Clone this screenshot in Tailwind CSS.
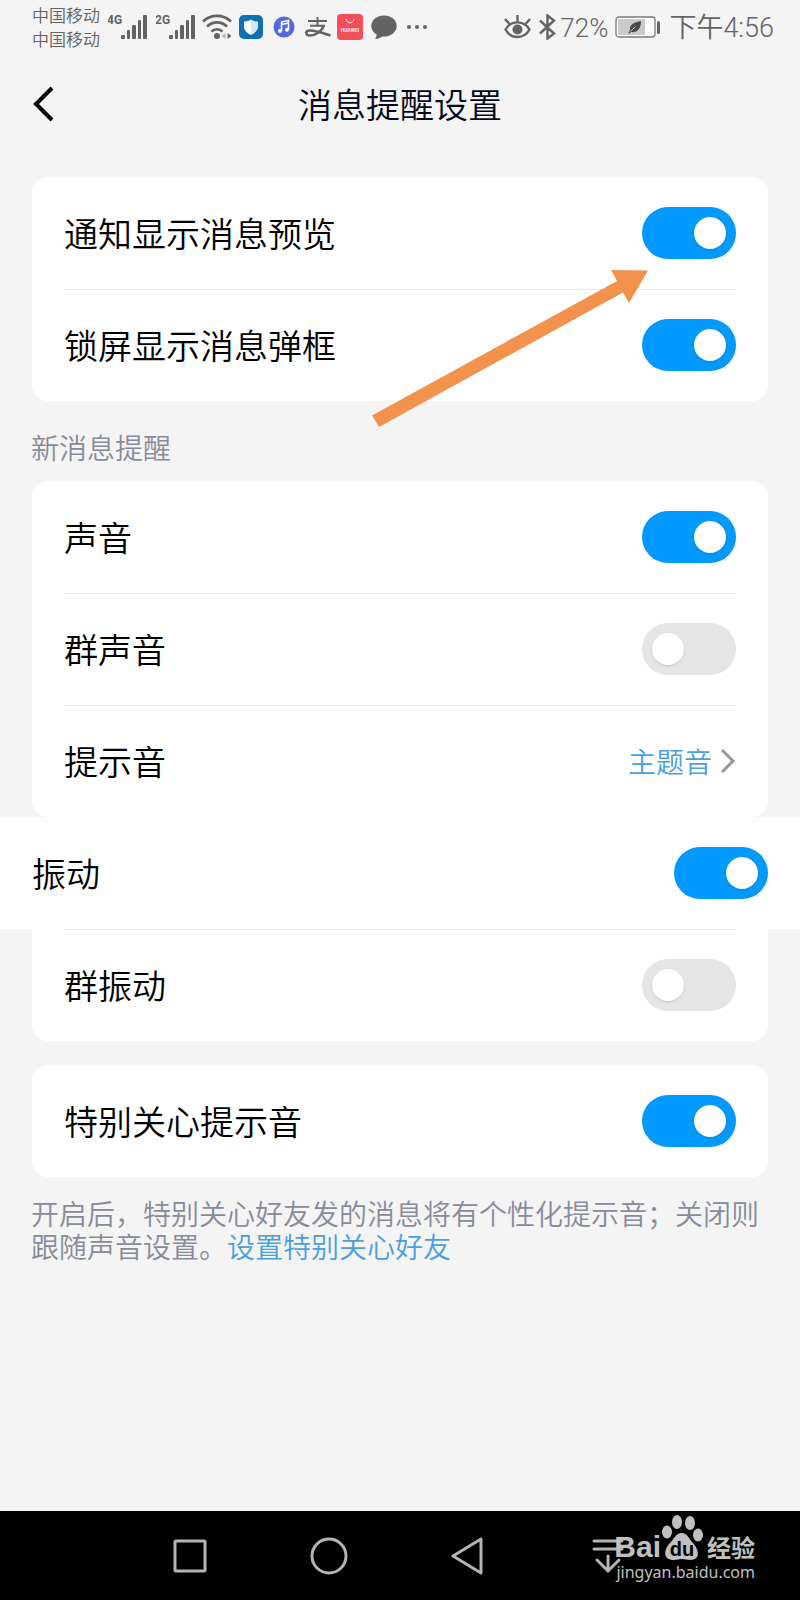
<!DOCTYPE html>
<html lang="zh-CN">
<head>
    <meta charset="UTF-8">
    <meta name="viewport" content="width=device-width, initial-scale=1.0">
    <title>消息提醒设置</title>
    <script src="https://cdn.jsdelivr.net/npm/@tailwindcss/browser@4"></script>
</head>
<body class="relative flex min-h-screen flex-col bg-[#f4f4f4] font-['Roboto','Noto_Sans_CJK_SC',sans-serif] font-[350] text-black">

    <!-- 状态栏 -->
    <div class="flex h-[54px] items-center justify-between pl-8 pr-[26px] text-[#636363]">
        <div class="flex items-center">
            <div class="pt-[2px] text-[17px] leading-6">
                <div>中国移动</div>
                <div>中国移动</div>
            </div>
            <!-- 信号 -->
            <svg class="ml-2 h-7 w-10" viewBox="0 0 40 28" fill="currentColor">
                <text x="-1" y="11" font-family="Roboto" font-size="12" font-weight="700">4G</text>
                <rect x="13" y="22" width="4" height="4" rx="1"/>
                <rect x="19" y="17" width="3" height="9" rx="1"/>
                <rect x="24" y="12" width="4" height="14" rx="1"/>
                <rect x="30" y="7" width="3" height="19" rx="1"/>
                <rect x="35" y="2" width="4" height="24" rx="1"/>
            </svg>
            <svg class="ml-2 h-7 w-10" viewBox="0 0 40 28" fill="currentColor">
                <text x="-1" y="11" font-family="Roboto" font-size="12" font-weight="700">2G</text>
                <rect x="13" y="22" width="4" height="4" rx="1"/>
                <rect x="19" y="17" width="3" height="9" rx="1"/>
                <rect x="24" y="12" width="4" height="14" rx="1"/>
                <rect x="30" y="7" width="3" height="19" rx="1"/>
                <rect x="35" y="2" width="4" height="24" rx="1"/>
            </svg>
            <!-- WiFi -->
            <svg class="ml-[6px] h-7 w-[30px]" viewBox="0 0 30 28" fill="none" stroke="currentColor" stroke-width="2.6">
                <path d="M1 8.500C9 1 21 1 29 8.500"/>
                <path d="M5 13.500C11 8 19 8 25 13.500"/>
                <path d="M9.500 18.500C12.500 15.500 17.500 15.500 20.500 18.500"/>
                <circle cx="15" cy="23" r="3" fill="currentColor" stroke="none"/>
                <path d="M23.500 20v6l-4-3z" fill="#b5b5b5" stroke="none"/>
                <path d="M25.500 20v6l4-3z" fill="currentColor" stroke="none"/>
            </svg>
            <!-- 手机管家 -->
            <svg class="ml-[7px] size-6" viewBox="0 0 24 24">
                <rect width="24" height="24" rx="5" fill="#0c70b3"/>
                <path d="M12 4.500c2.500 1.600 4.500 2 7 2v5c0 4-3 6.500-7 8.500z" fill="#d3e9f5"/>
                <path d="M12 4.500c-2.500 1.600-4.500 2-7 2v5c0 4 3 6.500 7 8.500z" fill="#fff"/>
            </svg>
            <!-- 音乐 -->
            <svg class="ml-[10px] size-[22px]" viewBox="0 0 22 22">
                <circle cx="11" cy="11" r="10.500" fill="#5369dc"/>
                <path d="M8.500 15V6l7-1.500V13.500M8.500 8.500l7-1.500" fill="none" stroke="#fff" stroke-width="1.500"/>
                <circle cx="7" cy="15" r="2" fill="#fff"/>
                <circle cx="14" cy="13.700" r="2" fill="#fff"/>
            </svg>
            <!-- 支付宝 -->
            <svg class="ml-[10px] h-[20px] w-[26px]" viewBox="0 0 26 20" fill="none" stroke="currentColor">
                <path d="M3 4h19M12.500 0v8.500M5 8.700h15" stroke-width="2"/>
                <path d="M19 8.500C17 14 11 18.500 5 18.500c-5 0-5-5 0-5 6 0 13 2.500 20.500 5" stroke-width="2.600"/>
            </svg>
            <!-- 华为应用市场 -->
            <svg class="ml-[6px] size-[26px]" viewBox="0 0 26 26">
                <rect width="26" height="26" rx="4" fill="#f44f59"/>
                <path d="M9 5c1 5 7 5 8 0" fill="none" stroke="#fff" stroke-width="1"/>
                <text x="13" y="17.500" text-anchor="middle" font-family="Roboto" font-size="5" font-weight="500" fill="#fff">HUAWEI</text>
            </svg>
            <!-- 短信 -->
            <svg class="ml-2 h-[25px] w-[26px]" viewBox="0 0 26 25" fill="currentColor">
                <ellipse cx="13" cy="11" rx="12.700" ry="10.500"/>
                <path d="M6 17c0 3-.5 5-2 7 4 0 7-2 9-4z"/>
            </svg>
            <svg class="ml-[10px] h-5 w-5" viewBox="0 0 20 20" fill="currentColor">
                <circle cx="2" cy="10" r="2"/>
                <circle cx="10" cy="10" r="2"/>
                <circle cx="18" cy="10" r="2"/>
            </svg>
        </div>

        <div class="flex items-center leading-8">
            <!-- 护眼 -->
            <svg class="h-6 w-[27px]" viewBox="0 0 27 24" fill="none" stroke="currentColor" stroke-width="2.4">
                <path d="M1.500 14.500C7 5 20 5 25.500 14.500C20 24.500 7 24.500 1.500 14.500z"/>
                <path d="M13.500 0v7M1 4l4.500 5M26 4l-4.500 5"/>
                <circle cx="13.500" cy="14.500" r="5" fill="currentColor" stroke="none"/>
            </svg>
            <!-- 蓝牙 -->
            <svg class="ml-2 h-[26px] w-[17px]" viewBox="0 0 17 26" fill="none" stroke="currentColor" stroke-width="2.4">
                <path d="M1 6.500l14 13L8.500 24.500V1.500L15 6.500l-14 13"/>
            </svg>
            <span class="ml-1 pt-[2px] text-[26px]">72%</span>
            <!-- 电池 -->
            <svg class="ml-[7px] h-[22px] w-[46px]" viewBox="0 0 46 22">
                <rect x="1" y="1" width="39" height="20" rx="3" fill="#fff" stroke="#7a7a7a" stroke-width="1.300"/>
                <rect x="3" y="3" width="27" height="16" fill="#cacaca"/>
                <path d="M26 5c-7 1-12 4-11 9l-1.500 3 1 .5L16 16c6 1 10-3 10-11z" fill="#4a4a4a"/>
                <path d="M15.500 15.500l5-5" stroke="#cacaca" stroke-width="1"/>
                <rect x="42" y="5" width="3" height="13" rx="1.500" fill="#636363"/>
            </svg>
            <span class="ml-2 pt-[2px] text-[27px]">下午4:56</span>
        </div>
    </div>

    <!-- 标题栏 -->
    <header class="grid h-[99px] grid-cols-[1fr_auto_1fr] items-center px-8">
        <button type="button" aria-label="返回" class="justify-self-start">
            <svg class="h-9 w-6" viewBox="0 0 24 36" fill="none" stroke="#000" stroke-width="4">
                <path d="M20 2L4 18l16 16"/>
            </svg>
        </button>
        <h1 class="pt-1 text-[34px] leading-10 text-[#03081a]">消息提醒设置</h1>
    </header>

    <main class="pt-6">
        <section class="mx-8 rounded-2xl bg-white px-8">
            <div class="flex h-28 items-center justify-between">
                <label for="preview" class="pt-1 text-[34px] leading-10">通知显示消息预览</label>
                <input id="preview" type="checkbox" role="switch" checked class="flex h-[52px] w-[94px] appearance-none items-center rounded-full bg-[#e5e5e5] p-[10px] before:size-8 before:rounded-full before:bg-white before:shadow before:content-[''] checked:justify-end checked:bg-[#0099ff]">
            </div>
            <div class="flex h-28 items-center justify-between border-t border-[#e9e9eb] pb-px">
                <label for="lockscreen" class="pt-1 text-[34px] leading-10">锁屏显示消息弹框</label>
                <input id="lockscreen" type="checkbox" role="switch" checked class="flex h-[52px] w-[94px] appearance-none items-center rounded-full bg-[#e5e5e5] p-[10px] before:size-8 before:rounded-full before:bg-white before:shadow before:content-[''] checked:justify-end checked:bg-[#0099ff]">
            </div>
        </section>

        <h2 class="flex h-20 items-center px-[31px] pt-4 text-[28px] leading-[33px] text-[#878b99]">新消息提醒</h2>

        <section class="mx-8 rounded-2xl bg-white px-8">
            <div class="flex h-28 items-center justify-between">
                <label for="sound" class="pt-1 text-[34px] leading-10">声音</label>
                <input id="sound" type="checkbox" role="switch" checked class="flex h-[52px] w-[94px] appearance-none items-center rounded-full bg-[#e5e5e5] p-[10px] before:size-8 before:rounded-full before:bg-white before:shadow before:content-[''] checked:justify-end checked:bg-[#0099ff]">
            </div>
            <div class="flex h-28 items-center justify-between border-t border-[#e9e9eb] pb-px">
                <label for="group-sound" class="pt-1 text-[34px] leading-10">群声音</label>
                <input id="group-sound" type="checkbox" role="switch" class="flex h-[52px] w-[94px] appearance-none items-center rounded-full bg-[#e5e5e5] p-[10px] before:size-8 before:rounded-full before:bg-white before:shadow before:content-[''] checked:justify-end checked:bg-[#0099ff]">
            </div>
            <a href="#" class="flex h-28 items-center border-t border-[#e9e9eb] pb-px">
                <span class="pt-1 text-[34px] leading-10">提示音</span>
                <span class="ml-auto pt-1 text-[28px] leading-[33px] text-[#4a9fe0]">主题音</span>
                <svg class="ml-2 h-6 w-4" viewBox="0 0 16 24" fill="none" stroke="#999" stroke-width="3">
                    <path d="M2 1l11 11L2 23"/>
                </svg>
            </a>
        </section>

        <!-- 振动：通栏 -->
        <div class="flex h-28 items-center justify-between bg-white px-8">
            <label for="vibrate" class="pt-1 text-[34px] leading-10">振动</label>
            <input id="vibrate" type="checkbox" role="switch" checked class="flex h-[52px] w-[94px] appearance-none items-center rounded-full bg-[#e5e5e5] p-[10px] before:size-8 before:rounded-full before:bg-white before:shadow before:content-[''] checked:justify-end checked:bg-[#0099ff]">
        </div>

        <section class="mx-8 rounded-b-2xl bg-white px-8">
            <div class="flex h-28 items-center justify-between border-t border-[#e9e9eb] pb-px">
                <label for="group-vibrate" class="pt-1 text-[34px] leading-10">群振动</label>
                <input id="group-vibrate" type="checkbox" role="switch" class="flex h-[52px] w-[94px] appearance-none items-center rounded-full bg-[#e5e5e5] p-[10px] before:size-8 before:rounded-full before:bg-white before:shadow before:content-[''] checked:justify-end checked:bg-[#0099ff]">
            </div>
        </section>

        <section class="mx-8 mt-6 rounded-2xl bg-white px-8">
            <div class="flex h-28 items-center justify-between">
                <label for="special" class="pt-1 text-[34px] leading-10">特别关心提示音</label>
                <input id="special" type="checkbox" role="switch" checked class="flex h-[52px] w-[94px] appearance-none items-center rounded-full bg-[#e5e5e5] p-[10px] before:size-8 before:rounded-full before:bg-white before:shadow before:content-[''] checked:justify-end checked:bg-[#0099ff]">
            </div>
        </section>

        <p class="px-[31px] pt-[22px] text-[28px] leading-[33px] text-[#878b99]">开启后，特别关心好友发的消息将有个性化提示音；关闭则跟随声音设置。<a href="#" class="text-[#4a9fe0]">设置特别关心好友</a></p>
    </main>

    <!-- 指示箭头 -->
    <svg class="pointer-events-none absolute left-[370px] top-[268px] h-40 w-[280px]" viewBox="0 0 280 160" fill="#f2924d">
        <path d="M278 2.500L259 35l-6-10.500L9 159l-7-11.500L247 13l-6-11z"/>
    </svg>

    <!-- 导航键 -->
    <nav class="relative mt-auto flex h-[89px] items-center justify-center gap-[105px] bg-black pr-1 text-[#b4b4b4]">
        <button type="button" aria-label="最近任务">
            <svg class="size-[34px]" viewBox="0 0 34 34" fill="none" stroke="currentColor" stroke-width="3">
                <rect x="2" y="2" width="30" height="30" rx="1"/>
            </svg>
        </button>
        <button type="button" aria-label="主屏幕">
            <svg class="size-[34px] overflow-visible" viewBox="0 0 34 34" fill="none" stroke="currentColor" stroke-width="3">
                <circle cx="17" cy="17" r="17"/>
            </svg>
        </button>
        <button type="button" aria-label="返回上一级">
            <svg class="size-[34px] overflow-visible" viewBox="0 0 34 34" fill="none" stroke="currentColor" stroke-width="3" stroke-linejoin="round">
                <path d="M2 17L30 0v34z"/>
            </svg>
        </button>
        <button type="button" aria-label="下拉通知">
            <svg class="size-[34px] overflow-visible" viewBox="0 0 34 34" fill="none" stroke="currentColor" stroke-width="3" stroke-linecap="round">
                <path d="M4 2h28M4 10h28M18 17v14M7 21l11 11 11-11"/>
            </svg>
        </button>

        <!-- 水印 -->
        <div class="absolute right-[45px] top-1 flex flex-col items-end text-[#c0c0c0]">
            <div class="flex items-end">
                <span class="font-['Liberation_Sans',sans-serif] text-[30px] leading-[30px] font-bold">Bai</span>
                <svg class="mb-px h-[46px] w-[42px]" viewBox="0 0 42 46" fill="currentColor">
                    <ellipse cx="6" cy="17" rx="5" ry="6.500"/>
                    <ellipse cx="16" cy="7" rx="5" ry="7"/>
                    <ellipse cx="29" cy="8" rx="5" ry="7"/>
                    <ellipse cx="37" cy="20" rx="5" ry="6.500"/>
                    <path d="M21 18c5 0 7 6 11 10 5 5 9 17-3 17-3 0-5-1-8-1s-5 1-8 1c-12 0-10-11-4-17 4-4 6-10 12-10z"/>
                    <text x="21" y="41" text-anchor="middle" font-family="Liberation Sans" font-size="20" font-weight="700" fill="#000">du</text>
                </svg>
                <span class="ml-1 font-['Noto_Sans_CJK_SC',sans-serif] text-[24px] leading-[30px] font-bold">经验</span>
            </div>
            <div class="font-['Noto_Sans',sans-serif] text-[16px] leading-5 font-normal">jingyan.baidu.com</div>
        </div>
    </nav>
</body>
</html>
